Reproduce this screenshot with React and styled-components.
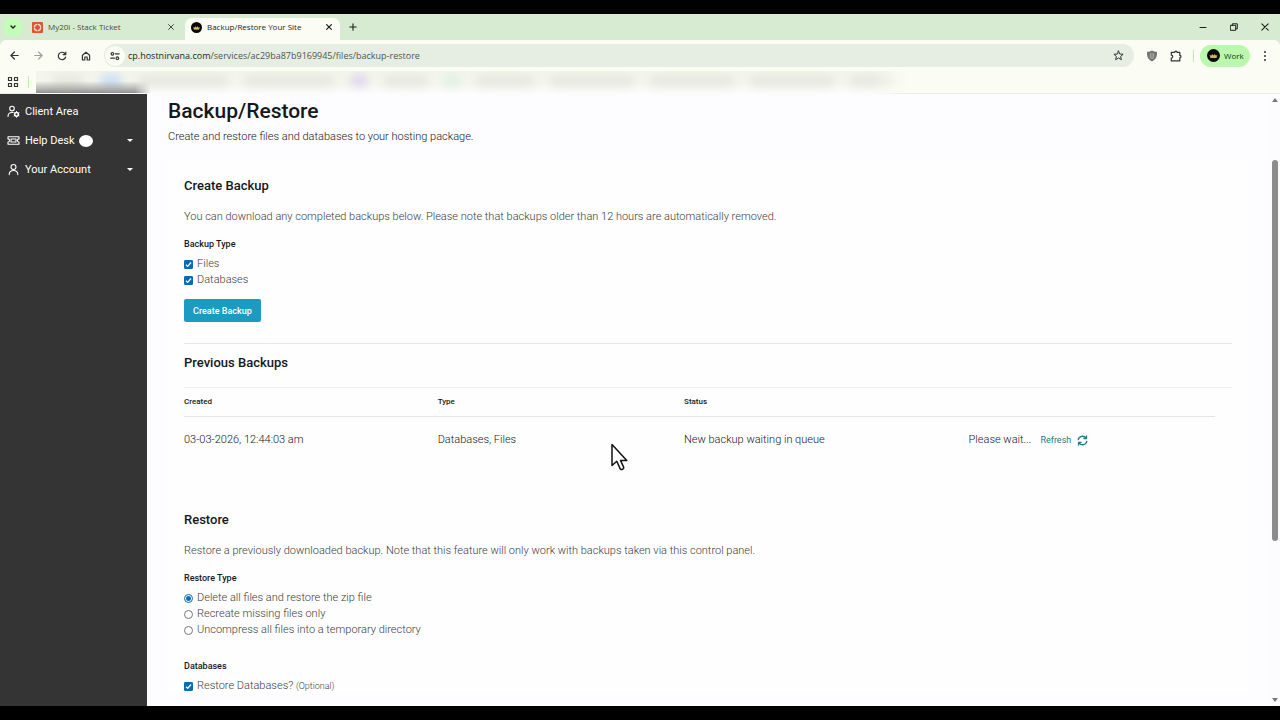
import React from 'react';
import styled, { createGlobalStyle } from 'styled-components';

const GlobalStyle = createGlobalStyle`
  *, *::before, *::after { box-sizing: border-box; }
  html, body { margin: 0; background: #000; }
  body { font-family: Roboto, "Liberation Sans", sans-serif; font-size: 11px; color: #15181b; }
  button, input { font: inherit; color: inherit; margin: 0; padding: 0; }
  button { border: 0; background: none; cursor: pointer; }
  h1, h2, p, fieldset, legend { margin: 0; padding: 0; border: 0; }
  svg { display: block; flex: none; }
`;

const Screen = styled.div`
  height: 100vh;
  padding: 14px 0;
  display: flex;
  flex-direction: column;
  background: #000;
`;

const Browser = styled.div`
  flex: 1;
  min-height: 0;
  display: flex;
  flex-direction: column;
  background: #d7ebd2;
  overflow: hidden;
`;

const TabBar = styled.header`
  height: 26px;
  flex: none;
  display: flex;
  align-items: center;
  padding: 0 0 0 4px;
  color: #1c1f1b;
`;

const TabSearch = styled.button`
  width: 18px;
  height: 18px;
  display: grid;
  place-items: center;
  border-radius: 6px;
  background: #c3fdb8;
`;

const Tab = styled.div`
  height: 22px;
  width: ${(p) => (p.$active ? 155 : 163)}px;
  align-self: flex-end;
  display: flex;
  align-items: center;
  gap: 5px;
  padding: 0 ${(p) => (p.$active ? '6px 4px 6px' : '9px 4px 10px')};
  border-radius: 7px 7px 0 0;
  background: ${(p) => (p.$active ? '#fbfcf3' : 'transparent')};
  color: ${(p) => (p.$active ? '#1c1f1b' : '#454b42')};
`;

const TabTitle = styled.span`
  flex: 1;
  font: 8px/12px "Open Sans", "Noto Sans", sans-serif;
  white-space: nowrap;
`;

const IconButton = styled.button`
  width: ${(p) => p.$size || 24}px;
  height: ${(p) => p.$size || 24}px;
  flex: none;
  display: grid;
  place-items: center;
`;

const NewTab = styled(IconButton)`
  margin-left: 4px;
`;

const WindowControls = styled.div`
  margin-left: auto;
  display: flex;
  button { width: 31px; height: 26px; }
`;

const Toolbar = styled.div`
  height: 31px;
  flex: none;
  display: flex;
  align-items: center;
  padding: 0 5px 0 2px;
  background: #fbfcf3;
  border-radius: 6px 6px 0 0;
  color: #30352e;
`;

const AddressBar = styled.div`
  flex: 1;
  height: 23px;
  margin: 0 6px 0 6px;
  padding: 0 4px 0 1px;
  display: flex;
  align-items: center;
  border-radius: 12px;
  background: #e6ede2;
`;

const SiteInfo = styled(IconButton)`
  border-radius: 50%;
  background: #fbfcf3;
`;

const Url = styled.div`
  flex: 1;
  padding-left: 3px;
  font: 9px/14px "Open Sans", "Noto Sans", sans-serif;
  color: #50564d;
  white-space: nowrap;
  b { font-weight: 400; color: #1c1f1b; }
`;

const Divider = styled.span`
  width: 1px;
  height: 12px;
  background: #c0ecb8;
`;

const Profile = styled.button`
  height: 22px;
  width: 50px;
  margin: 0 5px 0 6px;
  padding: 0 7px;
  display: flex;
  align-items: center;
  gap: 4px;
  border-radius: 11px;
  background: #baf9ad;
  color: #18331a;
  font: 8px/12px "Open Sans", "Noto Sans", sans-serif;
`;

const Extensions = styled.div`
  display: flex;
  margin-right: 5px;
`;

const Bookmarks = styled.div`
  height: 23px;
  flex: none;
  display: flex;
  align-items: center;
  padding-left: 7px;
  background: #fbfcf3;
  border-bottom: 1px solid #ebece6;
  color: #30352e;
  ${Divider} { margin: 0 7px 0 9px; }
`;

const BlurredStrip = styled.div`
  width: 872px;
  height: 23px;
  display: flex;
  align-items: flex-start;
  gap: 16px;
  padding: 4px 0 0 16px;
  overflow: hidden;
  background: linear-gradient(#f3f5ea, #f5f6ee 55%, #fdfcfe);
  mask-image: linear-gradient(90deg, #000 96%, transparent);
`;

const Smudge = styled.span`
  width: ${(p) => p.$w}px;
  height: 11px;
  flex: none;
  border-radius: 5px;
  background: ${(p) => p.$c || '#e6e8df'};
  filter: blur(4px);
`;

const SidebarGlow = styled.div`
  align-self: flex-end;
  width: 115px;
  height: 12px;
  margin-left: -872px;
  background: linear-gradient(rgba(110, 110, 110, 0), rgba(110, 110, 110, 0.75));
  mask-image: linear-gradient(90deg, #000 86%, transparent);
`;

const Page = styled.div`
  flex: 1;
  min-height: 0;
  display: flex;
  background: #fdfcfe;
`;

const Sidebar = styled.nav`
  width: 147px;
  flex: none;
  padding-top: 3px;
  background: #343434;
`;

const NavLink = styled.a`
  height: 29px;
  display: flex;
  align-items: center;
  padding: 0 14px 0 7px;
  color: #fff;
  line-height: 16px;
  text-decoration: none;
  span { margin-left: 5px; }
`;

const Count = styled.i`
  width: 14px;
  height: 12px;
  margin-left: 4px;
  border-radius: 50%;
  background: #fff;
`;

const Caret = styled.i`
  margin-left: auto;
  border: 3px solid transparent;
  border-top-color: #fff;
  border-bottom: 0;
`;

const Main = styled.main`
  flex: 1;
  min-width: 0;
  padding: 4px 22px 0 21px;
  overflow: hidden;
  font-weight: 300;
`;

const Title = styled.h1`
  font-size: 21px;
  font-weight: 500;
  line-height: 26px;
`;

const Lead = styled.p`
  margin-top: 5px;
  line-height: 16px;
`;

const Card = styled.section`
  margin-top: ${(p) => p.$gap}px;
  padding: 16px 16px 0;
  background: #fefefe;
`;

const Heading = styled.h2`
  font-size: 13px;
  font-weight: 500;
  line-height: 20px;
`;

const Hint = styled.p`
  margin-top: 13px;
  line-height: 16px;
  color: #3c3c3c;
`;

const Group = styled.fieldset`
  margin-top: ${(p) => p.$gap || 12}px;
  min-width: 0;
`;

const Legend = styled.legend`
  margin-bottom: 5px;
  font-size: 9px;
  font-weight: 500;
  line-height: 14px;
`;

const Option = styled.label`
  height: 16px;
  display: flex;
  align-items: center;
  gap: 4px;
  line-height: 16px;
  color: #3c3c3c;
  small { font-size: 9px; }
`;

const Tick = styled.input`
  appearance: none;
  width: 9px;
  height: 9px;
  flex: none;
  border: 1px solid #767676;
  border-radius: 1px;
  &:checked {
    border-color: #0d6cac;
    background: #0d6cac url("data:image/svg+xml,%3Csvg xmlns='http://www.w3.org/2000/svg' viewBox='0 0 7 7'%3E%3Cpath d='M1 3.7L2.7 5.4L6 1.5' fill='none' stroke='white' stroke-width='1.3'/%3E%3C/svg%3E");
  }
`;

const Radio = styled.input`
  appearance: none;
  width: 9px;
  height: 9px;
  flex: none;
  border: 1px solid #767676;
  border-radius: 50%;
  background: #fff;
  &:checked {
    border-color: #0d6cac;
    background: radial-gradient(circle, #0d6cac 2px, #fff 3px);
  }
`;

const PrimaryButton = styled.button`
  display: block;
  height: 23px;
  margin-top: 11px;
  padding: 0 9px;
  border-radius: 2px;
  background: #1b9bc2;
  color: #fff;
  font-size: 9px;
  font-weight: 500;
  line-height: 14px;
`;

const Previous = styled.div`
  margin-top: 21px;
  padding: 9px 0 30px;
  border-top: 1px solid #e6e6e6;
`;

const TableArea = styled.div`
  margin-top: 14px;
  padding-right: 17px;
  border-top: 1px solid #ececec;
`;

const Table = styled.table`
  width: 100%;
  table-layout: fixed;
  border-collapse: collapse;
  text-align: left;
  th, td { padding: 0; }
  th {
    height: 28px;
    border-bottom: 1px solid #e6e6e6;
    font-size: 8px;
    font-weight: 500;
    line-height: 12px;
  }
  td { height: 48px; line-height: 16px; }
  th:nth-child(1) { width: 24.6%; }
  th:nth-child(2) { width: 23.9%; }
  th:nth-child(3) { width: 27.6%; }
`;

const Actions = styled.div`
  display: flex;
  align-items: center;
  gap: 9px;
`;

const Refresh = styled.a`
  display: flex;
  align-items: center;
  gap: 6px;
  color: #23788b;
  font-size: 9px;
  font-weight: 400;
  line-height: 16px;
  text-decoration: none;
`;

const ScrollTrack = styled.div`
  width: 10px;
  flex: none;
  display: flex;
  flex-direction: column;
  align-items: center;
  padding: 4px 0;
  background: #fcfbfd;
`;

const ScrollThumb = styled.div`
  width: 6px;
  height: 63%;
  margin: 58px 0 auto;
  border-radius: 3px;
  background: #8b8b8b;
`;

const ScrollArrow = styled.i`
  border: 3px solid transparent;
  ${(p) => (p.$up ? 'border-top: 0; border-bottom: 4px solid #777;' : 'border-bottom: 0; border-top: 4px solid #777;')}
`;

const Cursor = styled.svg`
  position: absolute;
  left: 610px;
  top: 442px;
  pointer-events: none;
`;

const Line = ({ size = 12, box = 24, w = 2, children }) => (
  <svg width={size} height={size} viewBox={`0 0 ${box} ${box}`} fill="none" stroke="currentColor" strokeWidth={w} strokeLinecap="round" strokeLinejoin="round" aria-hidden="true">
    {children}
  </svg>
);

const CloseIcon = ({ size = 6, w = 1 }) => (
  <Line size={size} box={6} w={w}><path d="M.6 .6l4.8 4.8M5.4 .6L.6 5.4" /></Line>
);

const CrownBadge = ({ size }) => (
  <svg width={size} height={size} viewBox="0 0 12 12" aria-hidden="true">
    <circle cx="6" cy="6" r="6" fill="#080808" />
    <path d="M2.3 5.4l1.5 .8L4.7 4.6 6 6l1.3-1.4.9 1.6 1.5-.8-.9 2.4H3.2z" fill="#d7b655" />
    <path d="M3.2 7.8h5.6" stroke="#e9d79b" strokeWidth=".7" />
  </svg>
);

const StackLogo = () => (
  <svg width="11" height="11" viewBox="0 0 11 11" aria-hidden="true">
    <rect width="11" height="11" rx="1" fill="#dd5533" />
    <circle cx="5.5" cy="5.5" r="3.2" fill="none" stroke="#fbd9cc" strokeWidth="1.3" strokeDasharray="4.4 .6" />
  </svg>
);

const smudges = [
  [32], [22, '#c9dcf5'], [90], [90], [18, '#ddd6ee'], [44], [16, '#dcf1e1'], [58], [84], [84], [84], [46],
];

export default function App() {
  return (
    <Screen>
      <GlobalStyle />
      <Browser>
        <TabBar>
          <TabSearch aria-label="Search tabs"><Line size={8} box={8} w={1.4}><path d="M2 3l2 2 2-2" /></Line></TabSearch>
          <Tab>
            <StackLogo />
            <TabTitle>My20i - Stack Ticket</TabTitle>
            <IconButton $size={10} aria-label="Close My20i tab"><CloseIcon /></IconButton>
          </Tab>
          <Tab $active>
            <CrownBadge size={11} />
            <TabTitle>Backup/Restore Your Site</TabTitle>
            <IconButton $size={10} aria-label="Close Backup tab"><CloseIcon w={1.2} /></IconButton>
          </Tab>
          <NewTab $size={18} aria-label="New tab"><Line size={8} box={8} w={1.1}><path d="M4 .8v6.4M.8 4h6.4" /></Line></NewTab>
          <WindowControls>
            <IconButton aria-label="Minimize"><Line size={8} box={8} w={1}><path d="M1 4.5h6" /></Line></IconButton>
            <IconButton aria-label="Restore window">
              <Line size={8} box={8} w={1}><path d="M.7 2.3h5v5h-5zM2.3 2.3V.8h5v5H5.8" /></Line>
            </IconButton>
            <IconButton aria-label="Close window"><CloseIcon size={8} w={0.8} /></IconButton>
          </WindowControls>
        </TabBar>

        <Toolbar>
          <IconButton aria-label="Back"><Line size={9} box={9} w={1.2}><path d="M8.2 4.5H1M4.4 1L.9 4.5 4.4 8" /></Line></IconButton>
          <IconButton aria-label="Forward"><Line size={9} box={9} w={1.1}><path stroke="#9a9e96" d="M.8 4.5H8M4.6 1l3.5 3.5L4.6 8" /></Line></IconButton>
          <IconButton aria-label="Reload"><Line size={10} box={10} w={1.2}><path d="M8.6 6A3.7 3.7 0 1 1 7.8 2.5L8.7 3.5M8.8 1v2.6H6.2" /></Line></IconButton>
          <IconButton aria-label="Home"><Line size={10} box={10} w={1.2}><path d="M1.4 4.2L5 1.2l3.6 3V9H6.2V6H3.8v3H1.4z" /></Line></IconButton>
          <AddressBar>
            <SiteInfo $size={20} aria-label="Site information">
              <Line size={10} box={10} w={1.2}>
                <circle cx="2.4" cy="2.8" r="1.3" /><path d="M5.4 2.8h3.8M.8 7.2h3.6" /><circle cx="7.4" cy="7.2" r="1.3" />
              </Line>
            </SiteInfo>
            <Url><b>cp.hostnirvana.com</b>/services/ac29ba87b9169945/files/backup-restore</Url>
            <IconButton aria-label="Bookmark this page">
              <Line size={11} box={11} w={1}><path d="M5.5 1l1.3 3 3.3.3-2.5 2.2.8 3.2-2.9-1.7-2.9 1.7.8-3.2L.9 4.3 4.2 4z" /></Line>
            </IconButton>
          </AddressBar>
          <Extensions>
            <IconButton aria-label="Shield extension">
              <svg width="12" height="12" viewBox="0 0 12 12" aria-hidden="true">
                <path d="M6 .5C7.6 1.4 9 1.7 11 1.8 11.2 6 10.5 9 6 11.5 1.5 9 .8 6 1 1.8 3 1.7 4.4 1.4 6 .5z" fill="#74766f" />
                <path d="M4.5 3.5V7a1.5 1.5 0 0 0 3 0V3.5M6 3v4.5" fill="none" stroke="#b9bbb4" strokeWidth=".7" />
              </svg>
            </IconButton>
            <IconButton aria-label="Extensions">
              <Line size={12} box={12} w={1.2}><path d="M1.3 2.4H4.7a1.2 1.2 0 0 1 2.4 0H9.8v3a1.2 1.2 0 0 1 0 2.4v3.1H1.3V8.1a1.5 1.5 0 0 0 0-3z" /></Line>
            </IconButton>
          </Extensions>
          <Divider />
          <Profile><CrownBadge size={13} />Work</Profile>
          <IconButton $size={20} aria-label="Menu">
            <svg width="4" height="12" viewBox="0 0 4 12" fill="currentColor" aria-hidden="true"><circle cx="2" cy="2" r="1" /><circle cx="2" cy="6" r="1" /><circle cx="2" cy="10" r="1" /></svg>
          </IconButton>
        </Toolbar>

        <Bookmarks>
          <Line size={12} box={12} w={1.2}><path d="M1.5 1.5h3v3h-3zM7.5 1.5h3v3h-3zM1.5 7.5h3v3h-3zM7.5 7.5h3v3h-3z" /></Line>
          <Divider />
          <BlurredStrip>{smudges.map(([w, c], i) => <Smudge key={i} $w={w} $c={c} />)}</BlurredStrip>
          <SidebarGlow />
        </Bookmarks>

        <Page>
          <Sidebar>
            <NavLink href="#client">
              <Line size={13} box={13} w={1.1}>
                <circle cx="5" cy="3.6" r="2.3" /><path d="M1 11.5c0-2.5 1.7-4 4-4h1" />
                <circle cx="9.5" cy="9.3" r="1.9" strokeWidth="1.5" /><path strokeWidth=".9" d="M9.5 6.4v.8M9.5 11.5v.8M7 7.8l.7.4M11.4 10.4l.7.4M7 10.8l.7-.4M11.4 8.2l.7-.4" />
              </Line>
              <span>Client Area</span>
            </NavLink>
            <NavLink href="#help">
              <Line size={13} box={13} w={1.1}>
                <path d="M1 2.7h11v2.2a1.6 1.6 0 0 0 0 3.2v2.2H1V8.1a1.6 1.6 0 0 0 0-3.2z" /><path d="M4 5h5v3H4z" />
              </Line>
              <span>Help Desk</span><Count /><Caret />
            </NavLink>
            <NavLink href="#account">
              <Line size={13} box={13} w={1.1}><circle cx="6.5" cy="4" r="2.5" /><path d="M2.2 11.6C2.2 9 4 7.5 6.5 7.5s4.3 1.5 4.3 4.1" /></Line>
              <span>Your Account</span><Caret />
            </NavLink>
          </Sidebar>

          <Main>
            <Title>Backup/Restore</Title>
            <Lead>Create and restore files and databases to your hosting package.</Lead>

            <Card $gap={15}>
              <Heading>Create Backup</Heading>
              <Hint>You can download any completed backups below. Please note that backups older than 12 hours are automatically removed.</Hint>
              <Group>
                <Legend>Backup Type</Legend>
                <Option><Tick type="checkbox" defaultChecked />Files</Option>
                <Option><Tick type="checkbox" defaultChecked />Databases</Option>
              </Group>
              <PrimaryButton>Create Backup</PrimaryButton>
              <Previous>
                <Heading>Previous Backups</Heading>
                <TableArea>
                  <Table>
                    <thead>
                      <tr><th>Created</th><th>Type</th><th>Status</th><th aria-label="Actions" /></tr>
                    </thead>
                    <tbody>
                      <tr>
                        <td>03-03-2026, 12:44:03 am</td>
                        <td>Databases, Files</td>
                        <td>New backup waiting in queue</td>
                        <td>
                          <Actions>
                            Please wait...
                            <Refresh href="#refresh">
                              Refresh
                              <Line size={11} box={11} w={1.3}><path d="M1.2 4.6A4.3 4.3 0 0 1 9 3.2M9.8 6.4A4.3 4.3 0 0 1 2 7.8M9.5 1v2.6H6.9M1.5 10V7.4h2.6" /></Line>
                            </Refresh>
                          </Actions>
                        </td>
                      </tr>
                    </tbody>
                  </Table>
                </TableArea>
              </Previous>
            </Card>

            <Card $gap={0}>
              <Heading>Restore</Heading>
              <Hint>Restore a previously downloaded backup. Note that this feature will only work with backups taken via this control panel.</Hint>
              <Group>
                <Legend>Restore Type</Legend>
                <Option><Radio type="radio" name="restore" defaultChecked />Delete all files and restore the zip file</Option>
                <Option><Radio type="radio" name="restore" />Recreate missing files only</Option>
                <Option><Radio type="radio" name="restore" />Uncompress all files into a temporary directory</Option>
              </Group>
              <Group $gap={21}>
                <Legend>Databases</Legend>
                <Option><Tick type="checkbox" defaultChecked /><span>Restore Databases? <small>(Optional)</small></span></Option>
              </Group>
            </Card>
          </Main>

          <ScrollTrack aria-hidden="true">
            <ScrollArrow $up />
            <ScrollThumb />
            <ScrollArrow />
          </ScrollTrack>
        </Page>
      </Browser>
      <Cursor width="20" height="30" viewBox="0 0 20 30" aria-hidden="true">
        <path d="M2 2.5v21l4.8-4.3 3.2 7.2c.5 1.1 1.5 1.5 2.5 1s1.500-1.400 1-2.500l-3-6.500h6.300z" fill="#fff" stroke="#111" strokeWidth="1.5" strokeLinejoin="round" />
      </Cursor>
    </Screen>
  );
}
